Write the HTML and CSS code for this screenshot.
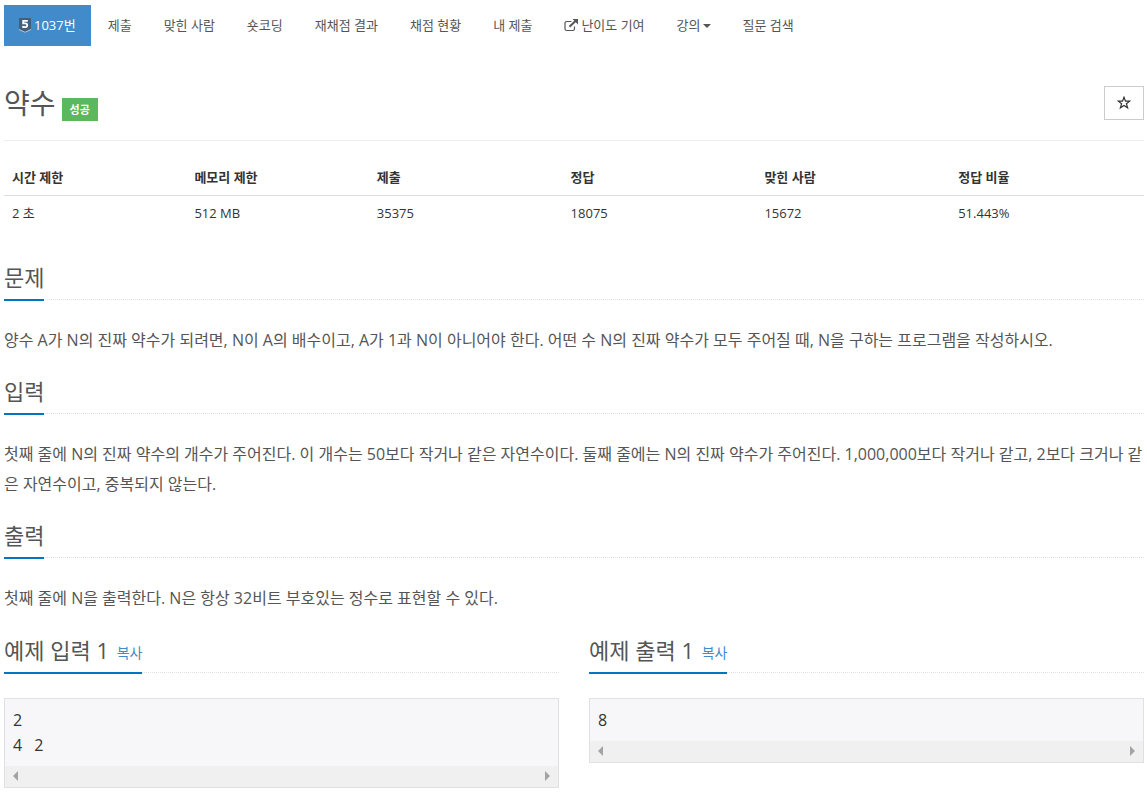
FILE: index.html
```html
<!DOCTYPE html>
<html lang="ko">
<head>
<meta charset="utf-8">
<title>1037번: 약수</title>
<link rel="stylesheet" href="styles.css">
</head>
<body>
<main class="container">
  <nav class="problem-menu">
    <a class="menu-link active" href="#">
      <svg class="tier" viewBox="0 0 12 15" aria-hidden="true">
        <path d="M0 0h12v11.500L6 15 0 11.500z" fill="#435f7a"/>
        <path d="M0 11.500l6 2.800 6-2.800" fill="none" stroke="#b9cbdc" stroke-width="1"/>
        <path d="M8.800 2.800H4.200V5.400H6.200Q8.200 5.400 8.200 7.300 8.200 9.200 6 9.200 4.600 9.200 3.200 8.700" fill="none" stroke="#fff" stroke-width="1.800"/>
      </svg>
      1037번</a>
    <a class="menu-link" href="#">제출</a>
    <a class="menu-link" href="#">맞힌 사람</a>
    <a class="menu-link" href="#">숏코딩</a>
    <a class="menu-link" href="#">재채점 결과</a>
    <a class="menu-link" href="#">채점 현황</a>
    <a class="menu-link" href="#">내 제출</a>
    <a class="menu-link" href="#">
      <svg class="external" viewBox="0 0 14 13" aria-hidden="true">
        <path d="M7.500 2.500H2.800Q1 2.500 1 4.300V9.700Q1 11.500 2.800 11.500H8.700Q10.500 11.500 10.500 9.700V7.500" fill="none" stroke="currentColor" stroke-width="1.200"/>
        <path d="M5.500 7.800L11.500 2" fill="none" stroke="currentColor" stroke-width="2"/>
        <path d="M8.500 0H14V5.500z" fill="currentColor"/>
      </svg>
      난이도 기여</a>
    <a class="menu-link" href="#">강의<span class="caret"></span></a>
    <a class="menu-link" href="#">질문 검색</a>
  </nav>

  <header class="page-header">
    <h1 class="title">약수</h1>
    <span class="label">성공</span>
    <button class="favorite" type="button" aria-label="즐겨찾기">
      <svg class="star" viewBox="0 0 14 14" aria-hidden="true">
        <path d="M7 1.200L8.500 5.100H12.700L9.400 7.700 10.600 11.800 7 9.400 3.400 11.800 4.600 7.700 1.300 5.100H5.500z" fill="none" stroke="#333" stroke-width="1.200"/>
      </svg>
    </button>
  </header>

  <table class="info">
    <thead>
      <tr><th class="narrow">시간 제한</th><th class="narrow">메모리 제한</th><th>제출</th><th>정답</th><th>맞힌 사람</th><th>정답 비율</th></tr>
    </thead>
    <tbody>
      <tr><td>2 초</td><td>512 MB</td><td>35375</td><td>18075</td><td>15672</td><td>51.443%</td></tr>
    </tbody>
  </table>

  <section class="section">
    <div class="headline"><h2>문제</h2></div>
    <p>양수 A가 N의 진짜 약수가 되려면, N이 A의 배수이고, A가 1과 N이 아니어야 한다. 어떤 수 N의 진짜 약수가 모두 주어질 때, N을 구하는 프로그램을 작성하시오.</p>
  </section>
  <section class="section">
    <div class="headline"><h2>입력</h2></div>
    <p>첫째 줄에 N의 진짜 약수의 개수가 주어진다. 이 개수는 50보다 작거나 같은 자연수이다. 둘째 줄에는 N의 진짜 약수가 주어진다. 1,000,000보다 작거나 같고, 2보다 크거나 같은 자연수이고, 중복되지 않는다.</p>
  </section>
  <section class="section">
    <div class="headline"><h2>출력</h2></div>
    <p>첫째 줄에 N을 출력한다. N은 항상 32비트 부호있는 정수로 표현할 수 있다.</p>
  </section>

  <div class="samples">
    <section>
      <div class="headline"><h2>예제 입력 1 <button class="copy" type="button">복사</button></h2></div>
      <div class="sample">
        <pre>2
4<span class="mono-space"> </span>2</pre>
        <div class="scrollbar"><span class="arrow left"></span><span class="arrow right"></span></div>
      </div>
    </section>
    <section>
      <div class="headline"><h2>예제 출력 1 <button class="copy" type="button">복사</button></h2></div>
      <div class="sample">
        <pre>8</pre>
        <div class="scrollbar"><span class="arrow left"></span><span class="arrow right"></span></div>
      </div>
    </section>
  </div>
</main>
</body>
</html>
```

FILE: styles.css
```css
* { box-sizing: border-box; }
body {
  margin: 0;
  background: #fff;
  color: #333;
  font-family: "Open Sans", "Noto Sans CJK KR", sans-serif;
  font-size: 13px;
  line-height: 21px;
}
h1, h2, p, pre { margin: 0; font-weight: 400; }
button { font-family: inherit; cursor: pointer; }
.container { padding: 5px 3px 5px 4px; }

.problem-menu { display: flex; flex-wrap: wrap; gap: 2px; }
.menu-link {
  display: flex;
  align-items: center;
  padding: 10px 15px;
  color: #555;
  text-decoration: none;
}
.menu-link.active { background: #428bca; color: #fff; }
.menu-link svg { margin-right: 3px; }
.tier { width: 12px; height: 15px; }
.external { width: 14px; height: 13px; }
.caret {
  margin-left: 2px;
  border: 4px solid transparent;
  border-top-color: currentColor;
  border-bottom: 0;
}

.page-header {
  display: flex;
  align-items: flex-start;
  gap: 6px;
  margin-top: 20px;
  padding: 20px 0 19px;
  border-bottom: 1px solid #eee;
}
.title { color: #555; font-size: 28px; line-height: 35px; }
.label {
  align-self: flex-end;
  padding: 0 8px;
  background: #5cb85c;
  color: #fff;
  font-size: 11px;
  font-weight: 700;
  line-height: 23px;
}
.favorite {
  display: flex;
  margin-left: auto;
  padding: 9px 12px;
  border: 1px solid #ccc;
  background: #fff;
}
.star { width: 14px; height: 14px; }

.info {
  width: 100%;
  margin-top: 19px;
  border-collapse: collapse;
  table-layout: fixed;
}
.info th {
  width: 17%;
  padding: 7px 8px;
  border-bottom: 1px solid #ddd;
  font-weight: 700;
  text-align: left;
}
.info th.narrow { width: 16%; }
.info td { padding: 7px 8px; }

.section { margin-top: 20px; }
.info + .section { margin-top: 30px; }
.headline { margin-bottom: 25px; border-bottom: 1px dotted #dde1e8; }
.headline h2 {
  display: inline-block;
  vertical-align: top;
  margin-bottom: -2px;
  padding-bottom: 5px;
  border-bottom: 2px solid #0076c0;
  color: #555;
  font-size: 22px;
  line-height: 33px;
}
.section p { color: #555; font-size: 16px; line-height: 30px; }

.samples {
  display: grid;
  grid-template-columns: 1fr 1fr;
  align-items: start;
  gap: 30px;
  margin-top: 21px;
}
.copy {
  margin-left: 2px;
  padding: 0;
  border: 0;
  background: none;
  color: #428bca;
  font-size: 14px;
  vertical-align: 1px;
}
.sample { border: 1px solid #e0e0e5; background: #f7f7f9; }
.sample pre {
  padding: 9px 8px 8px;
  font-family: inherit;
  font-size: 16px;
  line-height: 25px;
}
.mono-space { font-family: "Liberation Mono", monospace; font-size: 20px; line-height: 1; }
.scrollbar {
  display: flex;
  justify-content: space-between;
  padding: 5px 8px 6px;
  background: #f0f0f0;
}
.arrow { border: 5px solid transparent; }
.arrow.left { border-left: 0; border-right-color: #a3a3a3; }
.arrow.right { border-right: 0; border-left-color: #a3a3a3; }
```
